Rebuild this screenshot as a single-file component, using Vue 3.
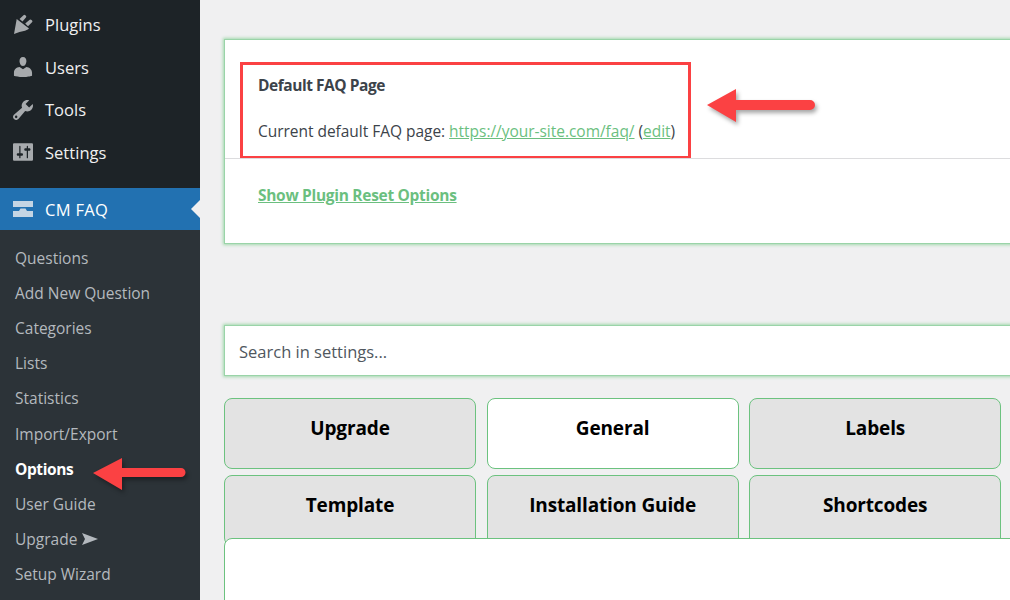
<script setup>
const adminItems = [
  { name: 'Plugins', box: '0 0 20 20', icon: 'M3.700 5L16 14.500c-1 1-2.500 1.800-4 2.200L6.500 18 1 20zM6.500 5l4-3.800a1.300 1.300 0 0 1 1.800 0l.6.600a1.300 1.300 0 0 1 0 1.800L9.500 7.500zM12.200 9.500l4.500-3.700a1.300 1.300 0 0 1 1.800.1l.6.600a1.300 1.300 0 0 1-.1 1.800L15 12.300z' },
  { name: 'Users', box: '2.500 2 15 16', icon: 'M10 9.25c-2.27 0-2.73-3.44-2.73-3.44C7 4.02 7.82 2 9.970 2c2.160 0 2.980 2.020 2.710 3.810 0 0-.41 3.440-2.680 3.440zm0 2.570L12.720 10c2.390 0 4.520 2.330 4.520 4.530v2.490s-3.650 1.130-7.240 1.130c-3.650 0-7.240-1.130-7.240-1.130v-2.490c0-2.250 1.940-4.480 4.470-4.480z' },
  { name: 'Tools', box: '2 2 16 16', icon: 'M16.680 9.770c-1.340 1.340-3.300 1.670-4.950.99l-5.410 6.520c-.99.99-2.590.99-3.580 0s-.99-2.590 0-3.570l6.520-5.420c-.68-1.650-.35-3.610.99-4.950 1.280-1.280 3.120-1.620 4.720-1.060l-2.890 2.890 2.820 2.820 2.860-2.870c.53 1.580.18 3.390-1.080 4.670zM3.810 16.210c.4.39 1.040.39 1.430 0 .4-.4.4-1.040 0-1.430-.39-.4-1.030-.4-1.430 0-.39.39-.39 1.030 0 1.430z' },
  { name: 'Settings', box: '2 2 16 16', icon: 'M18 16V4c0-.55-.45-1-1-1H3c-.55 0-1 .45-1 1v12c0 .55.45 1 1 1h14c.55 0 1-.45 1-1zM8 11h1c.55 0 1 .45 1 1s-.45 1-1 1H8v1.500c0 .28-.22.5-.5.5s-.5-.22-.5-.5V13H6c-.55 0-1-.45-1-1s.45-1 1-1h1V5.500c0-.28.22-.5.5-.5s.5.22.5.5V11zm5-2h-1c-.55 0-1-.45-1-1s.45-1 1-1h1V5.500c0-.28.22-.5.5-.5s.5.22.5.5V7h1c.55 0 1 .45 1 1s-.45 1-1 1h-1v5.500c0 .28-.22.5-.5.5s-.5-.22-.5-.5V9z' }
]

const subItems = ['Questions', 'Add New Question', 'Categories', 'Lists', 'Statistics', 'Import/Export', 'Options', 'User Guide', 'Upgrade', 'Setup Wizard']

const tabs = [
  { name: 'Upgrade' },
  { name: 'General', active: true },
  { name: 'Labels' },
  { name: 'Template' },
  { name: 'Installation Guide' },
  { name: 'Shortcodes' }
]
</script>

<template>
  <div class="page">
    <aside class="sidebar">
      <ul class="admin-menu">
        <li v-for="item in adminItems" :key="item.name" class="admin-item">
          <svg class="menu-icon" :viewBox="item.box">
            <path :d="item.icon" />
          </svg>
          <span>{{ item.name }}</span>
        </li>
      </ul>

      <div class="current-menu">
        <svg class="menu-icon" viewBox="0 -2 20 20">
          <path d="M0 0h20v6H0zM0 10h6l1.500-2.500h5L14 10h6v6H0z" />
        </svg>
        <span>CM FAQ</span>
      </div>

      <ul class="submenu">
        <li v-for="item in subItems" :key="item" :class="{ selected: item === 'Options' }">
          {{ item }}
          <svg v-if="item === 'Upgrade'" class="upgrade-arrow" viewBox="0 0 16 12">
            <path d="M0 0l16 6-16 6 3-6z" />
          </svg>
        </li>
      </ul>
    </aside>

    <main class="content">
      <section class="card">
        <div class="highlight">
          <strong>Default FAQ Page</strong>
          <p>Current default FAQ page: <a>https://your-site.com/faq/</a> (<a>edit</a>)</p>
        </div>
        <hr />
        <a class="reset-link">Show Plugin Reset Options</a>
      </section>

      <div class="search">Search in settings...</div>

      <div class="tabs">
        <button v-for="tab in tabs" :key="tab.name" class="tab" :class="{ active: tab.active }">{{ tab.name }}</button>
      </div>
      <div class="tab-panel"></div>
    </main>

    <svg class="arrow arrow-page" viewBox="0 0 112 40">
      <path d="M2 19L31 3v11h74a5 5 0 0 1 0 10H31v12z" />
    </svg>
    <svg class="arrow arrow-menu" viewBox="0 0 98 36">
      <path d="M3 17L32 2v10h59a4.500 4.500 0 0 1 0 9H32v13z" />
    </svg>
  </div>
</template>

<style>
html, body {
  margin: 0;
  overflow: hidden;
}
</style>

<style scoped>
.page {
  position: relative;
  display: flex;
  width: 1010px;
  height: 600px;
  overflow: hidden;
  background-color: #f0f0f1;
  font-family: "Open Sans", "Noto Sans", sans-serif;
}

.sidebar {
  flex: none;
  width: 200px;
  height: 600px;
  background-color: #1d2327;
}

ul {
  list-style: none;
  margin: 0;
  padding: 0;
}

.admin-menu {
  height: 188px;
  padding-top: 3px;
  box-sizing: border-box;
}

.admin-item, .current-menu {
  display: flex;
  align-items: center;
  gap: 12px;
  height: 42.7px;
  padding-left: 13px;
  color: #f0f0f1;
  font-size: 16.5px;
  letter-spacing: 0.03px;
}

.menu-icon {
  flex: none;
  width: 20px;
  height: 20px;
  fill: #a7aaad;
}

.current-menu {
  position: relative;
  height: 42px;
  background-color: #2271b1;
  color: #fff;
  letter-spacing: 0.3px;
}

.current-menu .menu-icon {
  fill: #c4d5e4;
}

.current-menu::after {
  content: "";
  position: absolute;
  right: 0;
  top: 12px;
  border: 9px solid transparent;
  border-right-color: #f0f0f1;
  border-left-width: 0;
}

.submenu {
  height: 370px;
  padding-top: 10px;
  background-color: #2c3338;
  color: #b4b9be;
  font-size: 15.5px;
}

.submenu li {
  display: flex;
  align-items: center;
  gap: 5px;
  height: 35.2px;
  padding-left: 15px;
}

.submenu .selected {
  color: #fff;
  font-weight: 700;
  letter-spacing: -0.4px;
}

.upgrade-arrow {
  width: 16px;
  height: 12px;
  fill: #b4b9be;
}

.content {
  flex: none;
  width: 900px;
  padding: 39px 0 0 24px;
}

.card {
  box-sizing: border-box;
  height: 205px;
  padding: 22px 0 0 15px;
  background-color: #fff;
  border: 1px solid #9ad4a8;
  box-shadow: 0 0 3px 1px #a3d8ae;
  color: #3c434a;
  font-size: 15.5px;
}

.highlight {
  box-sizing: border-box;
  width: 451px;
  height: 97px;
  padding: 10px 0 0 15px;
  border: 3px solid #fb4143;
}

.highlight strong {
  display: block;
  letter-spacing: -0.45px;
  line-height: 20px;
}

.highlight p {
  margin: 26px 0 0;
  line-height: 20px;
  letter-spacing: -0.03px;
  white-space: nowrap;
}

a {
  color: #6bbf7f;
  text-decoration: underline;
}

hr {
  margin: -1px 0 0 -15px;
  border: 0;
  border-top: 1px solid #dcdcde;
}

.reset-link {
  display: block;
  margin: 26px 0 0 18px;
  font-weight: 700;
  letter-spacing: -0.3px;
  line-height: 20px;
}

.search {
  box-sizing: border-box;
  height: 51px;
  margin-top: 81px;
  padding-left: 14px;
  background-color: #fff;
  border: 1px solid #9ad4a8;
  box-shadow: 0 0 3px 1px #a3d8ae;
  color: #50575e;
  font-size: 16.5px;
  line-height: 52px;
}

.tabs {
  display: grid;
  grid-template-columns: repeat(3, 252px);
  grid-template-rows: 71px 71px;
  column-gap: 10.6px;
  row-gap: 6px;
  height: 140px;
  margin-top: 22px;
}

.tab {
  box-sizing: border-box;
  height: 71px;
  padding: 0 0 12px;
  background-color: #e3e3e3;
  border: 1px solid #6cc27f;
  border-radius: 8px;
  color: #000;
  font-family: inherit;
  font-size: 19px;
  font-weight: 700;
  letter-spacing: -0.15px;
}

.tab.active {
  background-color: #fff;
}

.tab-panel {
  position: relative;
  height: 80px;
  background-color: #fff;
  border: 1px solid #6cc27f;
  border-radius: 8px 0 0 0;
}

.arrow {
  position: absolute;
  fill: #fb4143;
  filter: drop-shadow(2px 3px 2px rgba(0, 0, 0, 0.35));
}

.arrow-page {
  left: 705px;
  top: 86px;
  width: 112px;
  height: 40px;
}

.arrow-menu {
  left: 90px;
  top: 456px;
  width: 98px;
  height: 36px;
}
</style>
